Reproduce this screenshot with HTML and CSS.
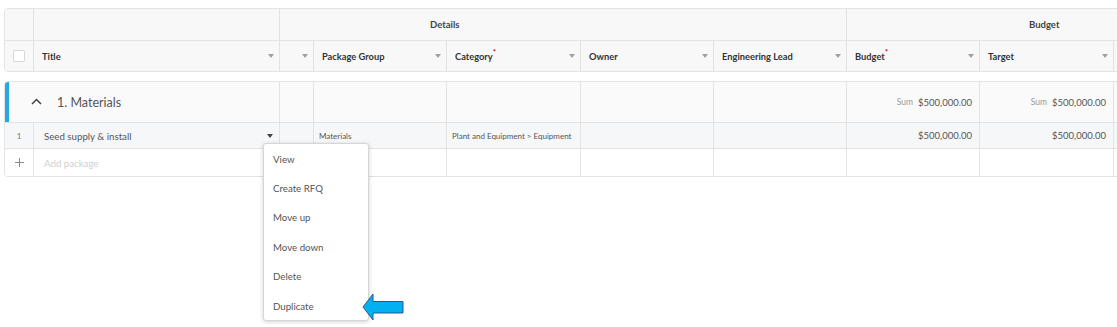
FILE: index.html
```html
<!DOCTYPE html>
<html>
<head>
<meta charset="utf-8">
<link rel="stylesheet" href="styles.css">
</head>
<body>
<div class="page">
  <div class="card head-card">
    <div class="row hrow1">
      <div class="cell"></div>
      <div class="cell"></div>
      <div class="cell span-details"><span class="group-label details-label">Details</span></div>
      <div class="cell span-budget"><span class="group-label budget-label">Budget</span></div>
    </div>
    <div class="row hrow2">
      <div class="cell center"><span class="checkbox"></span></div>
      <div class="cell hcell"><span class="hlabel">Title</span><span class="tri"></span></div>
      <div class="cell hcell"><span class="hlabel"></span><span class="tri"></span></div>
      <div class="cell hcell"><span class="hlabel">Package Group</span><span class="tri"></span></div>
      <div class="cell hcell"><span class="hlabel">Category<sup class="req">*</sup></span><span class="tri"></span></div>
      <div class="cell hcell"><span class="hlabel">Owner</span><span class="tri"></span></div>
      <div class="cell hcell"><span class="hlabel">Engineering Lead</span><span class="tri"></span></div>
      <div class="cell hcell"><span class="hlabel">Budget<sup class="req">*</sup></span><span class="tri"></span></div>
      <div class="cell hcell"><span class="hlabel">Target</span><span class="tri"></span></div>
      <div class="cell hcell"></div>
    </div>
  </div>

  <div class="card body-card">
    <div class="row grow">
      <div class="cell group-title">
        <svg class="chev" width="11" height="7" viewBox="0 0 11 7"><path d="M1 6 L5.5 1.5 L10 6" fill="none" stroke="#444" stroke-width="1.5"/></svg>
        <span>1. Materials</span>
      </div>
      <div class="cell"></div>
      <div class="cell"></div>
      <div class="cell"></div>
      <div class="cell"></div>
      <div class="cell"></div>
      <div class="cell money"><span class="sum">Sum</span>$500,000.00</div>
      <div class="cell money"><span class="sum">Sum</span>$500,000.00</div>
      <div class="cell"></div>
    </div>
    <div class="row drow">
      <div class="cell center rownum">1</div>
      <div class="cell dtitle"><span>Seed supply &amp; install</span><span class="tri dark"></span></div>
      <div class="cell"></div>
      <div class="cell small">Materials</div>
      <div class="cell small">Plant and Equipment &gt; Equipment</div>
      <div class="cell"></div>
      <div class="cell"></div>
      <div class="cell money">$500,000.00</div>
      <div class="cell money">$500,000.00</div>
      <div class="cell"></div>
    </div>
    <div class="row arow">
      <div class="cell center"><svg width="9" height="9" viewBox="0 0 9 9"><path d="M4.5 0 V9 M0 4.5 H9" stroke="#8a8a8a" stroke-width="1"/></svg></div>
      <div class="cell addpkg">Add package</div>
      <div class="cell"></div>
      <div class="cell"></div>
      <div class="cell"></div>
      <div class="cell"></div>
      <div class="cell"></div>
      <div class="cell"></div>
      <div class="cell"></div>
      <div class="cell"></div>
    </div>
  </div>

  <div class="menu">
    <div class="item">View</div>
    <div class="item">Create RFQ</div>
    <div class="item">Move up</div>
    <div class="item">Move down</div>
    <div class="item">Delete</div>
    <div class="item">Duplicate</div>
  </div>

  <svg class="arrow" width="44" height="29" viewBox="0 0 44 29">
    <polygon points="1,14 11,1 11,8.5 41,8.5 41,20 11,20 11,27" fill="#00b0f0" stroke="#2f5597" stroke-width="1"/>
  </svg>
</div>
</body>
</html>
```

FILE: styles.css
```css
html, body {
  margin: 0;
  padding: 0;
  background: #ffffff;
  overflow: hidden;
}
body {
  font-family: "Lato", "Liberation Sans", sans-serif;
  color: #555;
  width: 1117px;
  height: 327px;
}
.page {
  position: relative;
  width: 1117px;
  height: 327px;
  padding-top: 8px;
  box-sizing: border-box;
}
.card {
  margin-left: 4px;
  width: 1240px;
  border: 1px solid #e3e3e3;
  border-radius: 4px;
  overflow: hidden;
  box-sizing: border-box;
}
.body-card {
  margin-top: 9px;
}
.row {
  display: grid;
  grid-template-columns: 29px 246px 34px 133px 134px 133px 133px 133px 134px 120px;
}
.cell {
  box-sizing: border-box;
  border-right: 1px solid #e3e3e3;
  display: flex;
  align-items: center;
  min-width: 0;
  white-space: nowrap;
}
.center { justify-content: center; }

/* header */
.hrow1 {
  height: 32px;
  background: #f8f8f8;
  border-bottom: 1px solid #e3e3e3;
  box-sizing: border-box;
}
.span-details { grid-column: 3 / 8; }
.span-budget { grid-column: 8 / 11; border-right: none; }
.group-label {
  font-size: 9.5px;
  font-weight: 700;
  color: #444;
}
.details-label { padding-left: 150px; }
.budget-label { padding-left: 182px; }
.hrow2 {
  height: 30px;
  background: #f8f8f8;
}
.hcell {
  justify-content: space-between;
  padding-left: 8px;
  padding-right: 5px;
}
.hlabel {
  font-size: 9.3px;
  font-weight: 700;
  color: #333;
}
.req {
  color: #d0021b;
  font-size: 8px;
  vertical-align: top;
  position: relative;
  top: -3px;
  line-height: 1;
}
.checkbox {
  width: 12px;
  height: 12px;
  border: 1px solid #d8d8d8;
  border-radius: 2px;
  background: #fff;
  box-sizing: border-box;
}
.tri {
  width: 0;
  height: 0;
  border-left: 3.5px solid transparent;
  border-right: 3.5px solid transparent;
  border-top: 4px solid #a0a0a0;
}
.tri.dark { border-top-color: #444; }

/* body */
.grow {
  height: 41px;
  background: #fafafa;
  border-bottom: 1px solid #e3e3e3;
  box-sizing: border-box;
}
.group-title {
  grid-column: 1 / 3;
  padding-left: 26px;
  box-shadow: inset 4px 0 0 #2aa7e2;
  font-size: 12.5px;
  color: #555;
}
.chev { margin-right: 15px; margin-top: -2px; }
.money {
  justify-content: flex-end;
  padding-right: 7px;
  font-size: 9.5px;
  color: #555;
}
.sum {
  font-size: 8.5px;
  color: #999;
  margin-right: 5px;
}
.drow {
  height: 26px;
  background: #f6f7f9;
  border-bottom: 1px solid #e3e3e3;
  box-sizing: border-box;
}
.rownum {
  font-size: 8px;
  color: #777;
}
.dtitle {
  justify-content: space-between;
  padding-left: 10px;
  padding-right: 6px;
  font-size: 9.7px;
  color: #555;
}
.small {
  padding-left: 5px;
  font-size: 8px;
  color: #555;
}
.arow {
  height: 27px;
  background: #fff;
}
.addpkg {
  padding-left: 10px;
  font-size: 9.7px;
  color: #cfcfcf;
}

/* menu overlay */
.menu {
  position: absolute;
  left: 263px;
  top: 143px;
  width: 106px;
  box-sizing: border-box;
  background: #fff;
  border: 1px solid #d6d6d6;
  border-radius: 3px;
  box-shadow: 0 1px 4px rgba(0,0,0,0.18);
}
.item {
  height: 29.4px;
  display: flex;
  align-items: center;
  padding-left: 9px;
  font-size: 9.7px;
  color: #555;
}
.arrow {
  position: absolute;
  left: 362px;
  top: 293px;
}
```
